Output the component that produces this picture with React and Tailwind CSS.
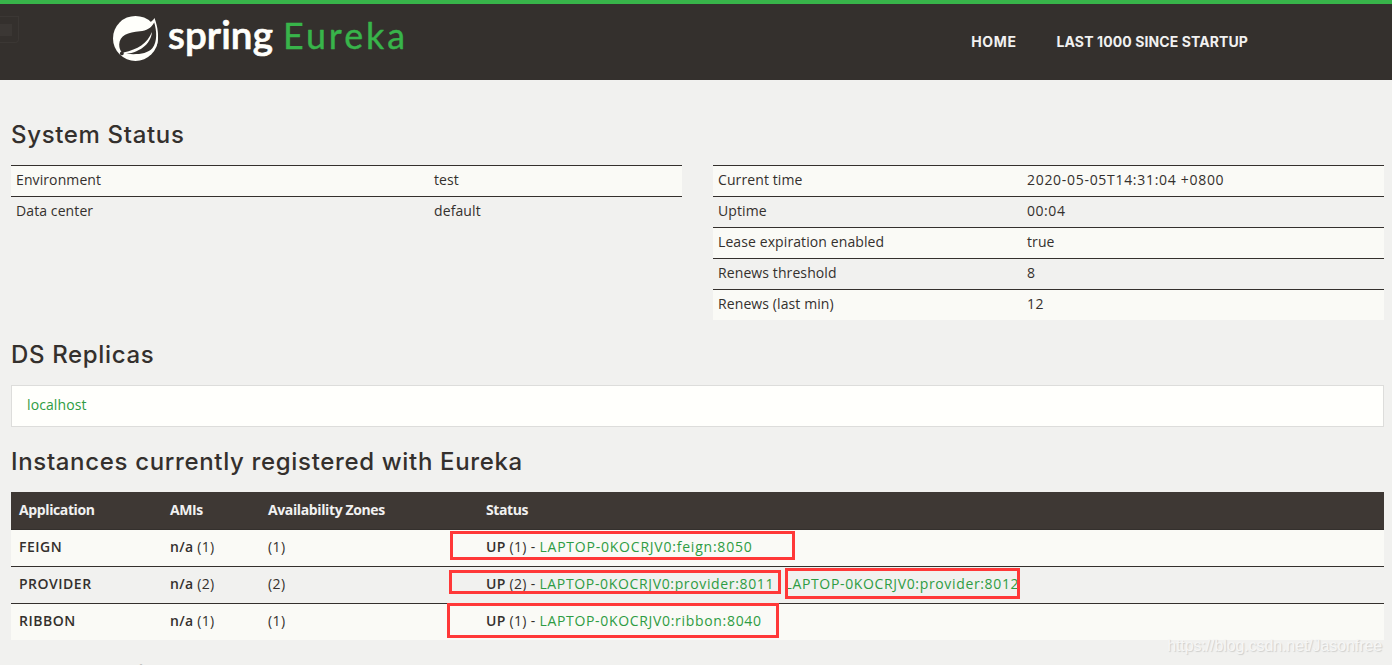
import { clsx } from 'clsx';

const statusLeft = [
  { name: 'Environment', value: 'test' },
  { name: 'Data center', value: 'default' },
];

const statusRight = [
  { name: 'Current time', value: '2020-05-05T14:31:04 +0800', spacing: 'tracking-[0.7px]' },
  { name: 'Uptime', value: '00:04', spacing: 'tracking-[0.55px]' },
  { name: 'Lease expiration enabled', value: 'true' },
  { name: 'Renews threshold', value: '8' },
  { name: 'Renews (last min)', value: '12', spacing: 'tracking-[0.5px]' },
];

const instances = [
  { app: 'FEIGN', count: 1, nodes: ['LAPTOP-0KOCRJV0:feign:8050'], spacing: 'tracking-[0.78px]' },
  { app: 'PROVIDER', count: 2, nodes: ['LAPTOP-0KOCRJV0:provider:8011', 'LAPTOP-0KOCRJV0:provider:8012'], spacing: 'tracking-[0.65px]' },
  { app: 'RIBBON', count: 1, nodes: ['LAPTOP-0KOCRJV0:ribbon:8040'], spacing: 'tracking-[0.68px]' },
];

function Logo() {
  return (
    <svg width="296" height="56" viewBox="0 0 296 56" className="block">
      <circle cx="22.5" cy="28.4" r="22.5" fill="#fffffb" />
      <path d="M34 14C38 12 40 10.500 41.500 8C44.500 16 47 28 43 37L36 32Z" fill="#fffffb" />
      {/* Leaf */}
      <path
        d="M41.200 12.500C38 18.500 33.500 20.600 27 21.200C15 22 6.500 25.500 6.200 34.500C6.200 38 7.200 40.500 9 42.500L15 44C25 44.500 34.500 44 39.500 38C44.500 31.500 43.800 21 41.200 12.500Z"
        fill="#34302d"
      />
      <path d="M39 22C34 33.500 25 39.500 10.500 42.400L10 44.400C26 43 37.500 35 39 22Z" fill="#fffffb" />
      <circle cx="8.800" cy="43.400" r="1.900" fill="#34302d" />
      <text x="55" y="39" textLength="105" lengthAdjust="spacingAndGlyphs" fontFamily="Lato" fontSize="39" fontWeight="600" fill="#fffffb" stroke="#fffffb" strokeWidth="0.7" strokeLinejoin="round">spring</text>
      <text x="170" y="39.300" textLength="125" lengthAdjust="spacingAndGlyphs" letterSpacing="3" fontFamily="Lato" fontSize="36" fill="#38b44a" stroke="#38b44a" strokeWidth="0.4" strokeLinejoin="round">Eureka</text>
    </svg>
  );
}

function Heading({ children, className }) {
  return (
    <h1 className={clsx("font-['Inter'] text-[24px] leading-[30px] font-medium tracking-[0.66px] whitespace-nowrap", className)}>
      {children}
    </h1>
  );
}

function StatusTable({ rows, first }) {
  return (
    <dl className="flex-1">
      {rows.map((row) => (
        <div key={row.name} className="flex h-[31px] border-t border-[#34302d] pl-[5px] leading-[27px] odd:bg-[#fafaf6]">
          <dt className={first}>{row.name}</dt>
          <dd className={row.spacing}>{row.value}</dd>
        </div>
      ))}
    </dl>
  );
}

export default function App() {
  return (
    <div className="relative h-[665px] w-[1392px] overflow-hidden bg-[#f1f1ef] font-['Open_Sans',sans-serif] text-[14px] tracking-[0.1px] text-[#34302d]">
      <header className="flex h-20 border-t-4 border-[#38b44a] bg-[#34302d]">
        <div className="mt-3 h-[27px] w-[19px] rounded-br border border-l-0 border-[#3b3734] pt-[7px]">
          <div className="size-3 bg-[#3b3734]" />
        </div>
        <div className="ml-[94px] mt-1.5">
          <Logo />
        </div>
        <nav className="ml-auto mr-36 flex gap-10 pt-[27px] font-['Inter'] text-[14px] leading-[22px] font-bold tracking-[0.1px] text-[#f1f1f1]">
          <a href="#" className="tracking-[0.6px]">HOME</a>
          <a href="#">LAST 1000 SINCE STARTUP</a>
        </nav>
      </header>

      <main className="pr-2 pl-[11px]">
        <Heading className="mt-10">System Status</Heading>
        <div className="mt-[15px] flex gap-[31px]">
          <StatusTable rows={statusLeft} first="w-[418px]" />
          <StatusTable rows={statusRight} first="w-[309px]" />
        </div>

        <Heading className="mt-5">DS Replicas</Heading>
        <div className="mt-[15px] h-[42px] border border-[#dddddb] bg-[#fffffc] pl-[15px] leading-[37px] text-[#2e9c43]">
          <a href="#">localhost</a>
        </div>

        <Heading className="mt-5">Instances currently registered with Eureka</Heading>
        <table className="mt-[15px] w-full table-fixed border-collapse text-left">
          <colgroup>
            <col className="w-[151px]" />
            <col className="w-[98px]" />
            <col className="w-[218px]" />
            <col />
          </colgroup>
          <thead>
            <tr className="h-[37px] border-b border-[#34302d] bg-[#3e3834] tracking-[-0.38px] text-[#f1f1f1]">
              <th className="p-0 pl-2 pb-px">Application</th>
              <th className="p-0 pl-2 pb-px">AMIs</th>
              <th className="p-0 pl-2 pb-px">Availability Zones</th>
              <th className="p-0 pl-2 pb-px">Status</th>
            </tr>
          </thead>
          <tbody>
            {instances.map((row) => (
              <tr key={row.app} className="h-[37px] border-b border-[#34302d] tracking-[0.3px] last:border-b-0 odd:bg-[#fafaf6]">
                <td className="p-0 pl-2 pb-[3px] font-semibold tracking-[0.5px]">{row.app}</td>
                <td className="p-0 pl-2 pb-[3px]"><b className="font-semibold">n/a</b> ({row.count})</td>
                <td className="p-0 pl-2 pb-[3px] tracking-[0.4px]">({row.count})</td>
                <td className="p-0 pl-2 pb-[3px] whitespace-nowrap">
                  <b className="font-semibold">UP</b> ({row.count}) -{' '}
                  {row.nodes.map((node, i) => (
                    <span key={node}>
                      {i > 0 && <span className="tracking-[-0.2px] text-[#dddddb]"> , </span>}
                      <a href="#" className={clsx('text-[#2e9c43]', row.spacing)}>{node}</a>
                    </span>
                  ))}
                </td>
              </tr>
            ))}
          </tbody>
        </table>

        <Heading className="mt-5">General Info</Heading>
      </main>

      {/* Highlight boxes over the status cells */}
      <div className="absolute left-[450px] top-[531px] h-[29px] w-[345px] border-3 border-[#ff3838]" />
      <div className="absolute left-[449px] top-[570px] h-6 w-[332px] border-3 border-[#ff3838]" />
      <div className="absolute left-[785px] top-[568px] h-[31px] w-[235px] border-3 border-[#ff3838]" />
      <div className="absolute left-[447px] top-[603px] h-[35px] w-[332px] border-3 border-[#ff3838]" />

      <div className="absolute right-[10px] top-[636px] font-['Liberation_Sans'] text-[16px] leading-5 tracking-[-0.1px] text-[#f6f6f5] [text-shadow:1px_1px_1px_#cfcfcd]">
        https://blog.csdn.net/Jasonfree
      </div>
    </div>
  );
}
